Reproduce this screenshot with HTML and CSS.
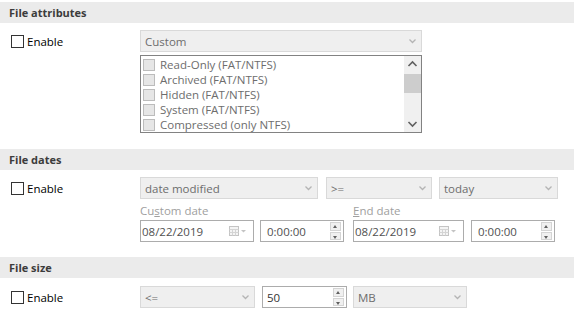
FILE: index.html
```html
<!DOCTYPE html>
<html lang="en">
  <head>
    <meta charset="UTF-8" />
    <title>Search filters</title>
    <link rel="stylesheet" href="styles.css">
  </head>
  <body>
    <!-- File attributes -->
    <section class="group">
      <h2 class="group-title">File attributes</h2>
      <div class="group-body">
        <label class="enable"><span class="check"></span>Enable</label>
        <div class="controls attr-controls">
          <div class="combo">
            <span>Custom</span>
            <svg class="chevron" width="7" height="5" viewBox="0 0 7 5"><path d="M0.5 0.5 L3.5 3.5 L6.5 0.5" /></svg>
          </div>
          <div class="listbox">
            <ul class="list-items">
              <li><span class="item-check"></span>Read-Only (FAT/NTFS)</li>
              <li><span class="item-check"></span>Archived (FAT/NTFS)</li>
              <li><span class="item-check"></span>Hidden (FAT/NTFS)</li>
              <li><span class="item-check"></span>System (FAT/NTFS)</li>
              <li><span class="item-check"></span>Compressed (only NTFS)</li>
            </ul>
            <div class="scrollbar">
              <svg class="scroll-arrow" width="17" height="17" viewBox="0 0 17 17"><path d="M4.5 10 L8.5 6 L12.5 10" /></svg>
              <div class="scroll-track"><div class="scroll-thumb"></div></div>
              <svg class="scroll-arrow" width="17" height="17" viewBox="0 0 17 17"><path d="M4.5 7 L8.5 11 L12.5 7" /></svg>
            </div>
          </div>
        </div>
      </div>
    </section>

    <!-- File dates -->
    <section class="group">
      <h2 class="group-title">File dates</h2>
      <div class="group-body">
        <label class="enable"><span class="check"></span>Enable</label>
        <div class="controls">
          <div class="combo-row">
            <div class="combo date-kind">
              <span>date modified</span>
              <svg class="chevron" width="7" height="5" viewBox="0 0 7 5"><path d="M0.5 0.5 L3.5 3.5 L6.5 0.5" /></svg>
            </div>
            <div class="combo date-op">
              <span>&gt;=</span>
              <svg class="chevron" width="7" height="5" viewBox="0 0 7 5"><path d="M0.5 0.5 L3.5 3.5 L6.5 0.5" /></svg>
            </div>
            <div class="combo date-when">
              <span>today</span>
              <svg class="chevron" width="7" height="5" viewBox="0 0 7 5"><path d="M0.5 0.5 L3.5 3.5 L6.5 0.5" /></svg>
            </div>
          </div>
          <div class="date-grid">
            <div class="field-label label-start">Cu<u>s</u>tom date</div>
            <div class="field-label label-end"><u>E</u>nd date</div>
            <div class="input date-input">
              <span>08/22/2019</span>
              <svg class="cal" width="17" height="10" viewBox="0 0 17 10">
                <rect x="0.5" y="0.5" width="9" height="9" class="cal-box" />
                <path d="M0.5 3.5 H9.5 M0.5 6.5 H9.5 M3.5 3.5 V9.5 M6.5 3.5 V9.5" class="cal-lines" />
                <path d="M12 4 H17 L14.5 6.5 Z" class="cal-drop" />
              </svg>
            </div>
            <div class="input spin-input">
              <span class="time">0:00:00</span>
              <div class="spinner"><span class="spin-btn up"></span><span class="spin-btn down"></span></div>
            </div>
            <div class="input date-input">
              <span>08/22/2019</span>
              <svg class="cal" width="17" height="10" viewBox="0 0 17 10">
                <rect x="0.5" y="0.5" width="9" height="9" class="cal-box" />
                <path d="M0.5 3.5 H9.5 M0.5 6.5 H9.5 M3.5 3.5 V9.5 M6.5 3.5 V9.5" class="cal-lines" />
                <path d="M12 4 H17 L14.5 6.5 Z" class="cal-drop" />
              </svg>
            </div>
            <div class="input spin-input">
              <span class="time">0:00:00</span>
              <div class="spinner"><span class="spin-btn up"></span><span class="spin-btn down"></span></div>
            </div>
          </div>
        </div>
      </div>
    </section>

    <!-- File size -->
    <section class="group">
      <h2 class="group-title">File size</h2>
      <div class="group-body">
        <label class="enable"><span class="check"></span>Enable</label>
        <div class="controls size-row">
          <div class="combo size-op">
            <span>&lt;=</span>
            <svg class="chevron" width="7" height="5" viewBox="0 0 7 5"><path d="M0.5 0.5 L3.5 3.5 L6.5 0.5" /></svg>
          </div>
          <div class="input spin-input size-value">
            <span class="num">50</span>
            <div class="spinner"><span class="spin-btn up"></span><span class="spin-btn down"></span></div>
          </div>
          <div class="combo size-unit">
            <span>MB</span>
            <svg class="chevron" width="7" height="5" viewBox="0 0 7 5"><path d="M0.5 0.5 L3.5 3.5 L6.5 0.5" /></svg>
          </div>
        </div>
      </div>
    </section>
  </body>
</html>
```

FILE: styles.css
```css
* {
  margin: 0;
  padding: 0;
  box-sizing: border-box;
}

body {
  font-family: "Open Sans", "Liberation Sans", sans-serif;
  font-size: 11.5px;
  color: #000;
  background-color: #fff;
  padding-top: 2px;
  width: 574px;
  overflow: hidden;
}

.group-title {
  height: 21px;
  line-height: 21px;
  padding-left: 9px;
  background-color: #ebebeb;
  color: #3c3c3c;
  font-size: 11px;
  font-weight: bold;
}

.group-body {
  display: flex;
  padding-top: 7px;
}

.group + .group {
  margin-top: 16px;
}

.group:last-child {
  margin-top: 15px;
}

.group:last-child .group-body {
  padding-top: 8px;
}

.enable {
  width: 140px;
  height: 22px;
  padding-left: 11px;
  display: flex;
  align-items: center;
}

.check {
  width: 13px;
  height: 13px;
  border: 1px solid #333;
  background-color: #fff;
  margin-right: 3px;
}

/* combo boxes (disabled look) */
.combo {
  height: 22px;
  border: 1px solid #d9d9d9;
  background-color: #efefef;
  color: #6d6d6d;
  padding: 0 5px 0 4px;
  display: flex;
  align-items: center;
  justify-content: space-between;
}

.chevron path {
  fill: none;
  stroke: #b4b4b4;
  stroke-width: 1.3;
}

.attr-controls {
  width: 282px;
}

.listbox {
  margin-top: 3px;
  height: 78px;
  border: 1px solid #828282;
  display: flex;
  background-color: #fff;
}

.list-items {
  list-style: none;
  flex: 1;
  padding: 1px 0 0 2px;
  color: #6d6d6d;
}

.list-items li {
  height: 15px;
  line-height: 15px;
  display: flex;
  align-items: center;
}

.item-check {
  width: 12px;
  height: 12px;
  border: 1px solid #bcbcbc;
  background-color: #e6e6e6;
  margin-right: 5px;
}

.scrollbar {
  width: 17px;
  background-color: #f0f0f0;
  display: flex;
  flex-direction: column;
}

.scroll-arrow path {
  fill: none;
  stroke: #606060;
  stroke-width: 1.6;
}

.scroll-track {
  flex: 1;
  padding-top: 1px;
}

.scroll-thumb {
  height: 19px;
  background-color: #cdcdcd;
}

/* dates */
.combo-row {
  display: flex;
  gap: 8px;
}

.date-kind {
  width: 178px;
}

.date-op {
  width: 106px;
}

.date-when {
  width: 119px;
  margin-left: -1px;
}

.date-grid {
  display: grid;
  grid-template-columns: 114px 84px 114px 85px;
  column-gap: 6px;
}

.field-label {
  height: 21px;
  padding-top: 4px;
  color: #a0a0a0;
  line-height: 16px;
}

.label-start {
  grid-column: 1 / 3;
}

.label-end {
  grid-column: 3 / 5;
  margin-left: 3px;
}

.input {
  height: 22px;
  border: 1px solid #acacac;
  background-color: #fff;
  color: #505050;
  display: flex;
  align-items: center;
  justify-content: space-between;
}

.date-input {
  padding: 0 7px 0 1px;
}

.date-grid .date-input:nth-of-type(5) {
  margin-left: 3px;
}

.date-grid .spin-input:last-child {
  margin-left: 1px;
}

.cal-box {
  fill: #f4f4f4;
  stroke: #c4c4c4;
}

.cal-lines {
  fill: none;
  stroke: #d4d4d4;
}

.cal-drop {
  fill: #c4c4c4;
}

.spin-input {
  padding: 0 2px 0 6px;
}

.spinner {
  width: 11px;
  height: 18px;
  display: flex;
  flex-direction: column;
  gap: 1px;
}

.spin-btn {
  flex: 1;
  background-color: #f0f0f0;
  border: 1px solid #d4d4d4;
  position: relative;
}

.spin-btn::after {
  content: "";
  position: absolute;
  left: 2px;
  top: 2px;
  border-left: 2.5px solid transparent;
  border-right: 2.5px solid transparent;
}

.spin-btn.up::after {
  border-bottom: 3px solid #606060;
}

.spin-btn.down::after {
  top: 3px;
  border-top: 3px solid #606060;
}

/* size */
.size-row {
  display: flex;
}

.size-op {
  width: 115px;
}

.size-value {
  width: 85px;
  margin-left: 7px;
  padding-left: 4px;
}

.size-value .num {
  color: #333;
}

.size-unit {
  width: 114px;
  margin-left: 6px;
}
```
